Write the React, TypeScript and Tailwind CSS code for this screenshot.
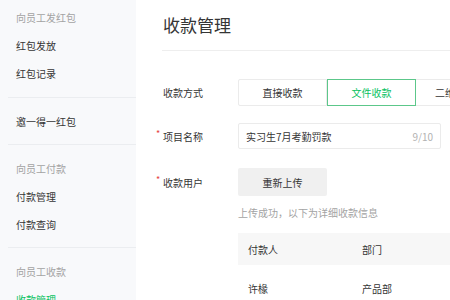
import React from 'react';

const font = { fontFamily: '"Noto Sans CJK SC", "Noto Sans", sans-serif' };

type MenuItem = { label: string; active?: boolean };
type MenuGroup = { title?: string; items: MenuItem[] };

const groups: MenuGroup[] = [
  { title: '向员工发红包', items: [{ label: '红包发放' }, { label: '红包记录' }] },
  { items: [{ label: '邀一得一红包' }] },
  { title: '向员工付款', items: [{ label: '付款管理' }, { label: '付款查询' }] },
  { title: '向员工收款', items: [{ label: '收款管理', active: true }] },
];

const Sidebar = () => (
  <div className="w-[136px] shrink-0 bg-[#f8f9fb] h-full">
    {groups.map((g, i) => (
      <div
        key={i}
        className={i === 0 ? 'pt-[3px] pb-[10px]' : 'ml-2 border-t border-[#ebedf0] pt-[9px] pb-[9px]'}
      >
        {g.title && (
          <div className={`h-[28px] flex items-center text-[10px] text-[#a3a3a3] ${i === 0 ? 'pl-4' : 'pl-2'}`}>
            {g.title}
          </div>
        )}
        {g.items.map(it => (
          <div
            key={it.label}
            className={`h-[28px] flex items-center text-[10px] ${i === 0 ? 'pl-4' : 'pl-2'} ${it.active ? 'text-[#07c160]' : 'text-[#353535]'}`}
          >
            {it.label}
          </div>
        ))}
      </div>
    ))}
  </div>
);

const Label = ({ text, required }: { text: string; required?: boolean }) => (
  <div className="w-[75px] h-[28px] shrink-0 flex items-center relative text-[10px] text-[#353535]">
    {required && <span className="absolute -left-[7px] top-[7px] text-[#e64340] text-[9px] leading-none">*</span>}
    {text}
  </div>
);

export default function App() {
  return (
    <div className="w-[450px] h-[300px] overflow-hidden flex bg-white" style={font}>
      <Sidebar />
      <div className="flex-1 min-w-0 pl-[26px] overflow-hidden">
        <div className="h-[51px] border-b border-[#eeeeee] flex items-center pl-[1px]">
          <h1 className="text-[17px] text-[#353535] leading-none pb-[2px]">收款管理</h1>
        </div>

        <div className="w-[330px] pl-[1px]">
          {/* 收款方式 */}
          <div className="flex items-center mt-[28px] h-[27px]">
            <Label text="收款方式" />
            <div className="flex h-[27px]">
              <div className="w-[89px] border border-[#ebebeb] rounded-l-[2px] flex items-center justify-center text-[10px] text-[#353535]">
                直接收款
              </div>
              <div className="w-[89px] border border-[#5cc78a] flex items-center justify-center text-[10px] text-[#07c160]">
                文件收款
              </div>
              <div className="w-[89px] border border-[#ebebeb] border-l-0 flex items-center justify-center text-[10px] text-[#353535]">
                二维码收款
              </div>
            </div>
          </div>

          {/* 项目名称 */}
          <div className="flex items-center mt-[17px] h-[26px]">
            <Label text="项目名称" required />
            <div className="w-[203px] h-[26px] border border-[#ebebeb] rounded-[2px] flex items-center justify-between px-[7px] text-[10px]">
              <span className="text-[#353535]">实习生7月考勤罚款</span>
              <span className="text-[#b2b2b2]">9/10</span>
            </div>
          </div>

          {/* 收款用户 */}
          <div className="flex items-start mt-[19px]">
            <Label text="收款用户" required />
            <div className="flex flex-col">
              <div className="w-[89px] h-[28px] bg-[#f0f0f0] rounded-[2px] flex items-center justify-center text-[10px] text-[#353535]">
                重新上传
              </div>
              <div className="mt-[10px] text-[10px] text-[#a3a3a3] leading-[14px]">上传成功，以下为详细收款信息</div>
              <div className="mt-[13px] w-[260px]">
                <div className="h-[32px] bg-[#f7f7f7] flex items-center text-[10px] text-[#353535]">
                  <span className="w-[124px] pl-[10px]">付款人</span>
                  <span>部门</span>
                </div>
                <div className="h-[46px] flex items-center text-[10px] text-[#353535]">
                  <span className="w-[124px] pl-[10px]">许椽</span>
                  <span>产品部</span>
                </div>
              </div>
            </div>
          </div>
        </div>
      </div>
    </div>
  );
}
